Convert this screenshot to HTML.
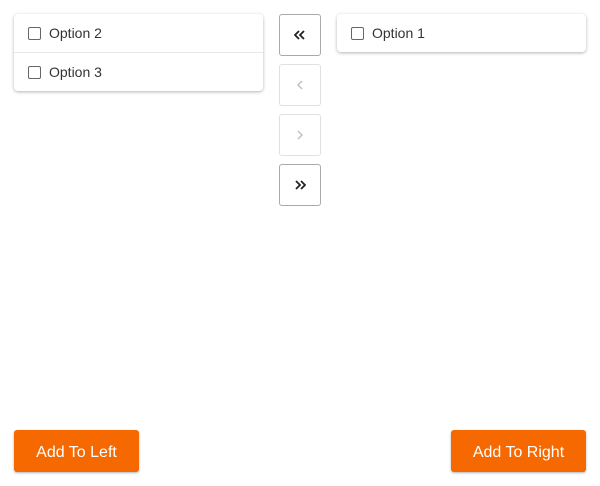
<!DOCTYPE html>
<html><head><style>
body{margin:0;width:600px;height:486px;background:#fff;font-family:"Liberation Sans","DejaVu Sans",sans-serif;position:relative;overflow:hidden}
.list{position:absolute;background:#fff;border-radius:4px;box-shadow:0 1px 3px rgba(0,0,0,.3)}
.row{height:38px;display:flex;align-items:center;font-size:14px;color:#333;border-bottom:1px solid #e8e8e8}
.row:last-child{border-bottom:none}
.cb{width:11px;height:11px;border:1px solid #666;border-radius:2px;margin:0 8px 0 14px}
.b{position:absolute;left:279px;width:40px;height:40px;border:1px solid #aaa;border-radius:3px;display:flex;align-items:center;justify-content:center;font-size:16px;color:#222}
.b.d{border-color:#e0e0e0;color:#bbb}
.ob{position:absolute;top:430px;height:42px;box-sizing:border-box;padding-top:3px;background:#f56900;color:#fff;border-radius:3px;font-size:16px;display:flex;align-items:center;justify-content:center;box-shadow:0 1px 2px rgba(0,0,0,.3)}
</style></head><body>
<div class="list" style="left:14px;top:14px;width:249px"><div class="row"><span class="cb"></span>Option 2</div><div class="row"><span class="cb"></span>Option 3</div></div>
<div class="list" style="left:337px;top:14px;width:249px"><div class="row"><span class="cb"></span>Option 1</div></div>
<div class="b" style="top:14px"><svg width="12" height="10" viewBox="0 0 12 10"><path d="M5 1L1 5l4 4M10 1L6 5l4 4" fill="none" stroke="#222" stroke-width="1.8"/></svg></div>
<div class="b d" style="top:64px"><svg width="8" height="10" viewBox="0 0 8 10"><path d="M6 1L2 5l4 4" fill="none" stroke="#bbb" stroke-width="1.3"/></svg></div>
<div class="b d" style="top:114px"><svg width="8" height="10" viewBox="0 0 8 10"><path d="M2 1l4 4-4 4" fill="none" stroke="#bbb" stroke-width="1.3"/></svg></div>
<div class="b" style="top:164px"><svg width="12" height="10" viewBox="0 0 12 10"><path d="M2 1l4 4-4 4M7 1l4 4-4 4" fill="none" stroke="#222" stroke-width="1.8"/></svg></div>
<div class="ob" style="left:14px;width:125px">Add To Left</div>
<div class="ob" style="left:451px;width:135px">Add To Right</div>
</body></html>
